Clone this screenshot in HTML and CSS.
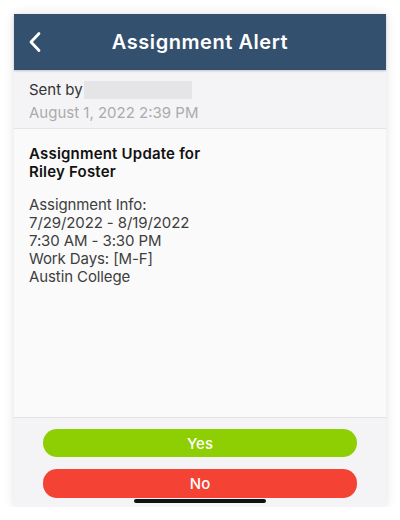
FILE: index.html
```html
<!DOCTYPE html>
<html>
<head>
<meta charset="utf-8">
<link rel="stylesheet" href="styles.css">
</head>
<body>
<div class="phone">
  <header class="bar">
    <svg class="back" width="14" height="22" viewBox="0 0 14 22"><path d="M11 2.5 L3 11 L11 19.5" fill="none" stroke="#fff" stroke-width="2.8" stroke-linecap="round" stroke-linejoin="round"/></svg>
    <h1 class="title">Assignment Alert</h1>
  </header>
  <section class="sender">
    <div class="sent-line">Sent by<span class="redact"></span></div>
    <div class="date">August 1, 2022 2:39 PM</div>
  </section>
  <main class="content">
    <div class="heading">Assignment Update for<br>Riley Foster</div>
    <div class="info">Assignment Info:<br>7/29/2022 - 8/19/2022<br>7:30 AM - 3:30 PM<br>Work Days: [M-F]<br>Austin College</div>
  </main>
  <footer class="actions">
    <button class="btn yes">Yes</button>
    <button class="btn no">No</button>
    <div class="home"></div>
  </footer>
</div>
</body>
</html>
```
FILE: styles.css
```css
html, body {
  margin: 0;
  padding: 0;
  background: #ffffff;
}
body {
  font-family: Inter, "Noto Sans", sans-serif;
  padding-top: 14px;
}
.phone {
  width: 372px;
  height: 493px;
  margin: 0 auto;
  display: flex;
  flex-direction: column;
  background: #fafafa;
  box-shadow: 0 0 10px rgba(0, 0, 0, 0.12);
  position: relative;
}
.bar {
  height: 56px;
  background: #34506f;
  display: flex;
  align-items: center;
  justify-content: center;
  position: relative;
  box-shadow: 0 1px 2px rgba(0,0,0,0.2);
  z-index: 1;
}
.back {
  position: absolute;
  left: 14px;
  top: 17px;
}
.title {
  margin: 0;
  color: #fff;
  font-size: 20px;
  font-weight: 600;
  letter-spacing: 0.55px;
}
.sender {
  height: 59px;
  background: #f4f4f6;
  border-bottom: 1px solid #e4e4e6;
  padding: 10px 15px 0;
  box-sizing: border-box;
  font-size: 15px;
  line-height: 24px;
}
.sent-line {
  color: #333;
  display: flex;
  align-items: center;
  gap: 1px;
  height: 20px;
}
.redact {
  display: inline-block;
  width: 108px;
  height: 18px;
  background: #e5e5e7;
}
.date {
  color: #ababab;
  margin-top: 1px;
}
.content {
  flex: 1;
  padding: 16px 15px 0;
  background: #fafafa;
  font-size: 15px;
  line-height: 18px;
}
.heading {
  font-weight: 600;
  color: #111;
  letter-spacing: 0.2px;
}
.info {
  margin-top: 15px;
  color: #3e3e3e;
  letter-spacing: -0.1px;
}
.actions {
  height: 90px;
  box-sizing: border-box;
  border-top: 1px solid #e2e2e4;
  background: #f4f4f6;
  padding: 11px 29px 0;
  display: flex;
  flex-direction: column;
  gap: 12px;
  position: relative;
}
.btn {
  height: 28px;
  border: none;
  border-radius: 14px;
  color: #fff;
  font-family: Inter, "Noto Sans", sans-serif;
  font-size: 15px;
  font-weight: 500;
  padding: 0;
}
.yes { background: #8dcf02; height: 28px; }
.no { background: #f44335; height: 29px; }
.home {
  position: absolute;
  left: 120px;
  top: 81px;
  width: 132px;
  height: 4px;
  border-radius: 2px;
  background: #111;
}
```
